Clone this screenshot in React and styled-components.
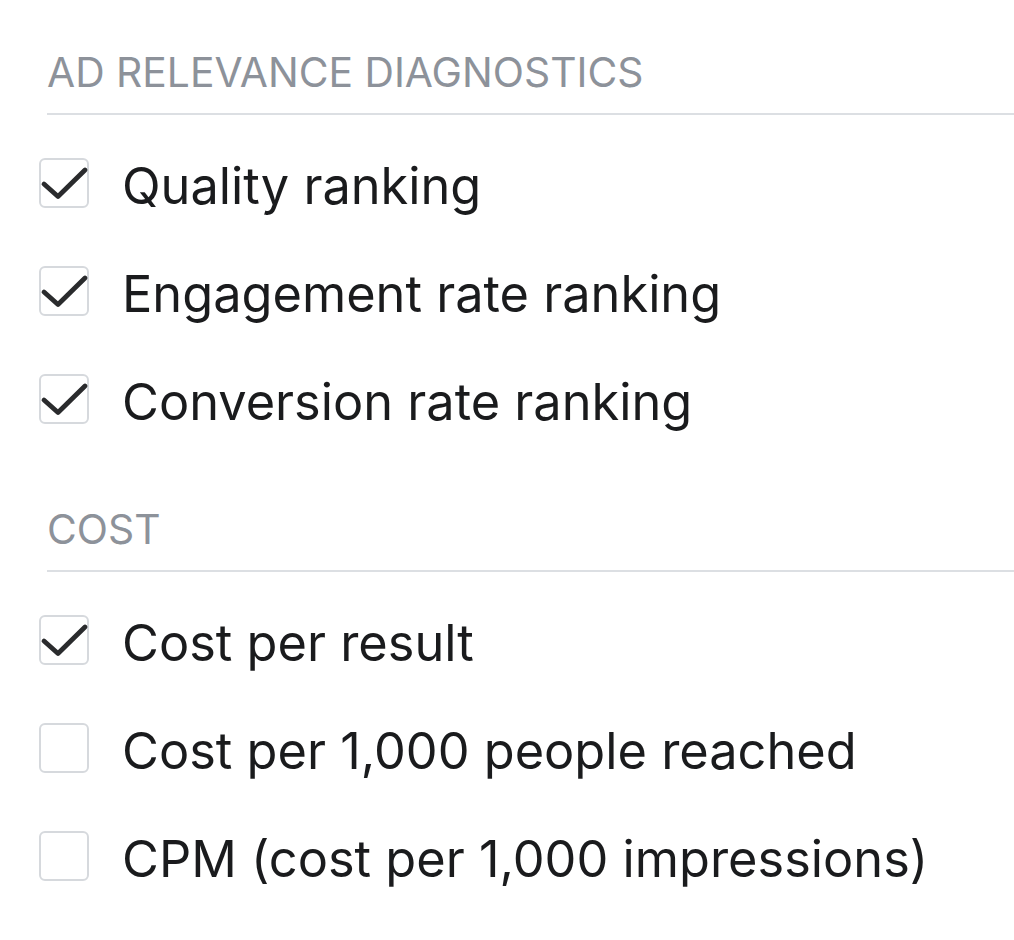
import React from "react";
import styled, { createGlobalStyle } from "styled-components";

const Global = createGlobalStyle`
  html, body { margin: 0; padding: 0; background: #ffffff; }
  body { font-family: Inter, "Liberation Sans", Arial, sans-serif; }
`;

const Page = styled.div`
  width: 1014px;
  height: 940px;
  box-sizing: border-box;
  padding: 48px 0 0 39px;
  display: flex;
  flex-direction: column;
  gap: 52px;
  overflow: hidden;
`;

const Section = styled.section`
  display: flex;
  flex-direction: column;
`;

const Heading = styled.h2`
  margin: 0 0 0 8px;
  font-size: 40.8px;
  line-height: 48px;
  font-weight: 400;
  color: #8d929a;
  letter-spacing: 0;
`;

const Divider = styled.div`
  margin: 17px 0 14px 8px;
  height: 2px;
  background: #dcdfe3;
`;

const List = styled.div`
  display: flex;
  flex-direction: column;
`;

const Row = styled.label`
  display: flex;
  align-items: center;
  height: 108px;
  gap: 33px;
  cursor: pointer;
`;

const Box = styled.span`
  width: 50px;
  height: 50px;
  box-sizing: border-box;
  border: 2px solid #d6d9dd;
  border-radius: 6px;
  background: #fff;
  flex: none;
  position: relative;
`;

const Check = styled.svg`
  position: absolute;
  left: -2px;
  top: -2px;
  width: 50px;
  height: 50px;
`;

const Label = styled.span`
  font-size: 50.5px;
  letter-spacing: 0;
  color: #1a1b1d;
  line-height: 60px;
  padding-top: 6px;
  white-space: nowrap;
`;

const sections = [
  {
    title: "AD RELEVANCE DIAGNOSTICS",
    items: [
      { label: "Quality ranking", checked: true },
      { label: "Engagement rate ranking", checked: true },
      { label: "Conversion rate ranking", checked: true },
    ],
  },
  {
    title: "COST",
    items: [
      { label: "Cost per result", checked: true },
      { label: "Cost per 1,000 people reached", checked: false },
      { label: "CPM (cost per 1,000 impressions)", checked: false },
    ],
  },
];

function Checkbox({ checked }) {
  return (
    <Box>
      {checked && (
        <Check viewBox="0 0 50 50">
          <path
            d="M5 26 L19 38.5 L46 12"
            fill="none"
            stroke="#2a2b2d"
            strokeWidth="4.8"
            strokeLinecap="round"
            strokeLinejoin="round"
          />
        </Check>
      )}
    </Box>
  );
}

export default function App() {
  return (
    <>
      <Global />
      <Page>
        {sections.map((s) => (
          <Section key={s.title}>
            <Heading>{s.title}</Heading>
            <Divider />
            <List>
              {s.items.map((it) => (
                <Row key={it.label}>
                  <Checkbox checked={it.checked} />
                  <Label>{it.label}</Label>
                </Row>
              ))}
            </List>
          </Section>
        ))}
      </Page>
    </>
  );
}
